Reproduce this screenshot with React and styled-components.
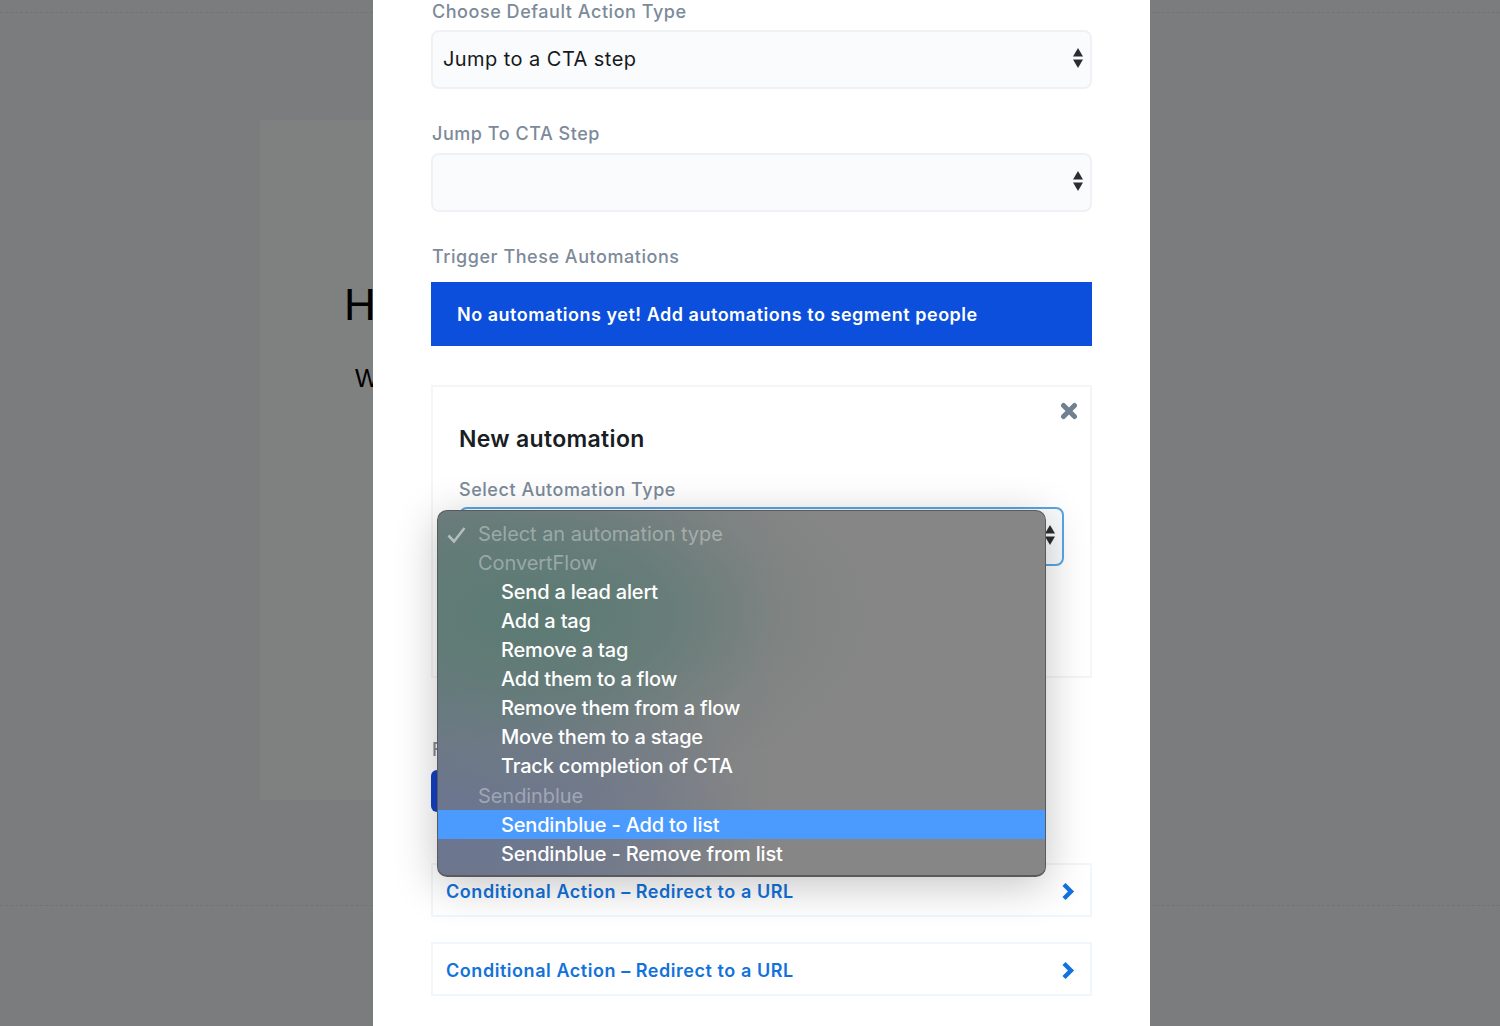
import React from "react";
import styled, { createGlobalStyle } from "styled-components";

const Global = createGlobalStyle`
  html, body { margin: 0; padding: 0; }
  body { font-family: Inter, "Liberation Sans", sans-serif; overflow: hidden; }
`;

const Page = styled.div`
  position: relative;
  width: 1500px;
  height: 1026px;
  overflow: hidden;
  background: #7b7c7e;
`;

const Backdrop = styled.div`
  display: flex;
  flex-direction: column;
  height: 100%;
`;

const Dashed = styled.div`
  height: 0;
  margin-top: ${(p) => p.$top}px;
  border-top: 1px dashed #727376;
`;

const BackCard = styled.div`
  width: 800px;
  height: 680px;
  margin: 107px 0 0 260px;
  padding: 160px 0 0 84px;
  box-sizing: border-box;
  background: #7f8080;
  color: #000;
  font-family: "Liberation Sans", sans-serif;
`;

const BackTitle = styled.div`
  font-size: 44px;
  line-height: 50px;
`;

const BackText = styled.div`
  font-size: 25px;
  line-height: 30px;
  margin: 33px 0 0 11px;
`;

const Modal = styled.div`
  position: absolute;
  top: 0;
  bottom: 0;
  left: 373px;
  width: 777px;
  padding: 1px 58px 0;
  box-sizing: border-box;
  background: #fff;
  display: flex;
  flex-direction: column;
`;

const Label = styled.div`
  font-size: 18px;
  line-height: 22px;
  font-weight: 500;
  letter-spacing: 0.54px;
  padding-left: ${(p) => (p.$flush ? 0 : 1)}px;
  color: #7c8a99;
  white-space: nowrap;
  margin-bottom: ${(p) => p.$gap ?? 8}px;
`;

const Select = styled.div`
  height: 59px;
  box-sizing: border-box;
  display: flex;
  align-items: center;
  justify-content: space-between;
  padding: 0 7px 2px 10px;
  background: #fafbfc;
  border: 2px solid ${(p) => (p.$focus ? "#5aa5e6" : "#f0f1f4")};
  border-radius: 8px;
  font-size: 20px;
  letter-spacing: 0.44px;
  color: #16191d;
  margin-bottom: ${(p) => p.$gap ?? 0}px;
`;

const Arrows = styled.svg`
  width: 10px;
  height: 20px;
  margin-bottom: 1px;
`;

const Banner = styled.div`
  height: 64px;
  display: flex;
  align-items: center;
  padding-left: 26px;
  background: #0b4fdc;
  color: #fff;
  font-size: 18px;
  font-weight: 600;
  letter-spacing: 0.52px;
  margin-bottom: 39px;
`;

const Panel = styled.div`
  position: relative;
  height: 293px;
  box-sizing: border-box;
  padding: 37px 26px 0;
  border: 2px solid #f3f5f7;
  margin-bottom: 61px;
`;

const PanelTitle = styled.div`
  font-size: 23px;
  line-height: 30px;
  font-weight: 600;
  letter-spacing: 0.32px;
  color: #191d24;
  margin-bottom: 25px;
`;

const Close = styled.svg`
  position: absolute;
  top: 15px;
  right: 12px;
  width: 18px;
  height: 18px;
`;

const DarkButton = styled.div`
  width: 200px;
  height: 42px;
  border-radius: 6px;
  background: #1241c4;
  margin-bottom: 51px;
`;

const LinkRow = styled.div`
  height: 54px;
  box-sizing: border-box;
  display: flex;
  align-items: center;
  justify-content: space-between;
  padding: 3px 15px 0 13px;
  border: 2px solid #f1f6fc;
  margin-bottom: 25px;
  font-size: 18px;
  font-weight: 600;
  letter-spacing: 0.55px;
  color: #1272dc;
`;

const Menu = styled.div`
  position: absolute;
  top: 510px;
  left: 64px;
  width: 609px;
  height: 367px;
  box-sizing: border-box;
  padding-top: 8px;
  border: 1px solid #5a5a5c;
  border-bottom-width: 2px;
  border-radius: 10px;
  overflow: hidden;
  background:
    radial-gradient(ellipse 340px 190px at 16% 28%, rgba(90, 122, 114, 0.95) 0%, rgba(94, 123, 116, 0.7) 40%, rgba(110, 125, 122, 0.3) 72%, rgba(120, 130, 128, 0) 100%),
    radial-gradient(ellipse 320px 210px at 0% 88%, #6b7590 0%, rgba(107, 117, 144, 0.6) 50%, rgba(107, 117, 144, 0) 100%),
    linear-gradient(to right, #6f7c80 0%, #7c8084 28%, #868686 56%);
`;

const MenuShadow = styled.div`
  position: absolute;
  top: 510px;
  left: 64px;
  width: 609px;
  height: 367px;
  border-radius: 10px;
  box-shadow: 0 8px 44px rgba(0, 0, 0, 0.24);
`;

const MenuRow = styled.div`
  position: relative;
  height: 29px;
  display: flex;
  align-items: center;
  padding-left: ${(p) => (p.$group ? 40 : 63)}px;
  margin-top: ${(p) => p.$push ?? 0}px;
  font-size: 20px;
  font-weight: ${(p) => (p.$group ? 400 : 500)};
  letter-spacing: ${(p) => (p.$group ? -0.06 : -0.19)}px;
  color: ${(p) => (p.$group ? "rgba(255,255,255,0.36)" : "#fff")};
  background: ${(p) => (p.$active ? "#4b9bff" : "transparent")};
  white-space: nowrap;
`;

const Check = styled.svg`
  position: absolute;
  left: 9px;
  top: 7px;
  width: 20px;
  height: 18px;
`;

const UpDown = () => (
  <Arrows viewBox="0 0 10 20" fill="#2c2d30">
    <path d="M5 0 10 8.5H0z" />
    <path d="M0 11.5h10L5 20z" />
  </Arrows>
);

const ChevronIcon = () => (
  <svg width="14" height="19" viewBox="0 0 14 19" fill="none" stroke="#1272e0" strokeWidth="4.4">
    <path d="M3 2.5 10 9.5 3 16.5" />
  </svg>
);

const groups = [
  { label: "Select an automation type", checked: true },
  { label: "ConvertFlow" },
  { item: "Send a lead alert" },
  { item: "Add a tag" },
  { item: "Remove a tag" },
  { item: "Add them to a flow" },
  { item: "Remove them from a flow" },
  { item: "Move them to a stage" },
  { item: "Track completion of CTA" },
  { label: "Sendinblue", push: 1 },
  { item: "Sendinblue - Add to list", active: true },
  { item: "Sendinblue - Remove from list" },
];

export default function App() {
  return (
    <Page>
      <Global />
      <Backdrop>
        <Dashed $top={12} />
        <BackCard>
          <BackTitle>Hello</BackTitle>
          <BackText>Welcome</BackText>
        </BackCard>
        <Dashed $top={105} />
      </Backdrop>
      <Modal>
        <Label $gap={7}>Choose Default Action Type</Label>
        <Select $gap={34}>
          Jump to a CTA step
          <UpDown />
        </Select>
        <Label>Jump To CTA Step</Label>
        <Select $gap={34}>
          <span />
          <UpDown />
        </Select>
        <Label $gap={14}>Trigger These Automations</Label>
        <Banner>No automations yet! Add automations to segment people</Banner>
        <Panel>
          <Close viewBox="0 0 18 18" fill="none" stroke="#6f8090" strokeWidth="5" strokeLinecap="round">
            <path d="M3.5 3.5 14.5 14.5M14.5 3.5 3.5 14.5" />
          </Close>
          <PanelTitle>New automation</PanelTitle>
          <Label $flush $gap={6}>Select Automation Type</Label>
          <Select $focus>
            <span />
            <UpDown />
          </Select>
        </Panel>
        <Label $gap={9}>Fallback</Label>
        <DarkButton />
        <LinkRow>
          Conditional Action – Redirect to a URL
          <ChevronIcon />
        </LinkRow>
        <LinkRow>
          Conditional Action – Redirect to a URL
          <ChevronIcon />
        </LinkRow>
        <MenuShadow />
        <Menu>
          {groups.map((g) => (
            <MenuRow key={g.label || g.item} $group={!!g.label} $active={g.active} $push={g.push}>
              {g.checked && (
                <Check viewBox="0 0 20 18" fill="none" stroke="rgba(255,255,255,0.5)" strokeWidth="2.6">
                  <path d="M1.5 9.5 7 15.5 17.5 2" />
                </Check>
              )}
              {g.label || g.item}
            </MenuRow>
          ))}
        </Menu>
      </Modal>
    </Page>
  );
}
